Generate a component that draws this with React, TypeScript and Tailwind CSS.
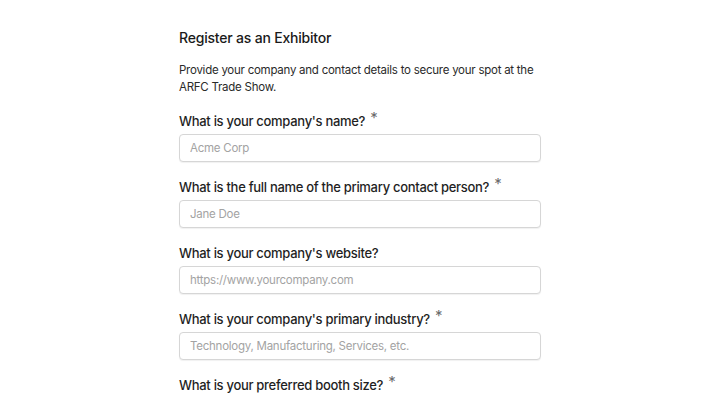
import React from 'react';

interface Field {
  label: string;
  placeholder?: string;
  required?: boolean;
}

const fields: Field[] = [
  { label: "What is your company's name?", placeholder: 'Acme Corp', required: true },
  { label: 'What is the full name of the primary contact person?', placeholder: 'Jane Doe', required: true },
  { label: "What is your company's website?", placeholder: 'https://www.yourcompany.com' },
  { label: "What is your company's primary industry?", placeholder: 'Technology, Manufacturing, Services, etc.', required: true },
  { label: 'What is your preferred booth size?', required: true },
];

const App: React.FC = () => {
  return (
    <div
      className="min-h-screen bg-white text-[#1a1a1a]"
      style={{ fontFamily: 'Inter, "Noto Sans", sans-serif' }}
    >
      <div className="mx-auto w-[362px] pt-[28px]">
        <h1 className="text-[14px] font-medium leading-[20px] tracking-[-0.2px]">Register as an Exhibitor</h1>
        <p className="mt-[14px] text-[11.5px] leading-[17px] tracking-[-0.25px] text-[#2a2a2a]">
          Provide your company and contact details to secure your spot at the ARFC Trade Show.
        </p>
        <div className="mt-[15px] flex flex-col gap-[15px]">
          {fields.map((f) => (
            <div key={f.label} className="flex flex-col gap-[3px]">
              <label className="text-[13px] leading-[20px] font-medium tracking-[-0.3px] text-[#1f1f1f]">
                {f.label}
                {f.required && (
                  <span className="relative -top-[3px] ml-[5px] text-[15px] font-normal leading-[10px] text-[#6b6b6b]">*</span>
                )}
              </label>
              {f.placeholder && (
                <input
                  type="text"
                  placeholder={f.placeholder}
                  className="h-[28px] w-full rounded-[4px] border border-[#d6d6d6] bg-white px-[10px] text-[11.5px] tracking-[-0.25px] text-[#1a1a1a] shadow-[0_1px_1px_rgba(0,0,0,0.06)] outline-none placeholder:text-[#a3a3a3]"
                />
              )}
            </div>
          ))}
        </div>
      </div>
    </div>
  );
};

export default App;
